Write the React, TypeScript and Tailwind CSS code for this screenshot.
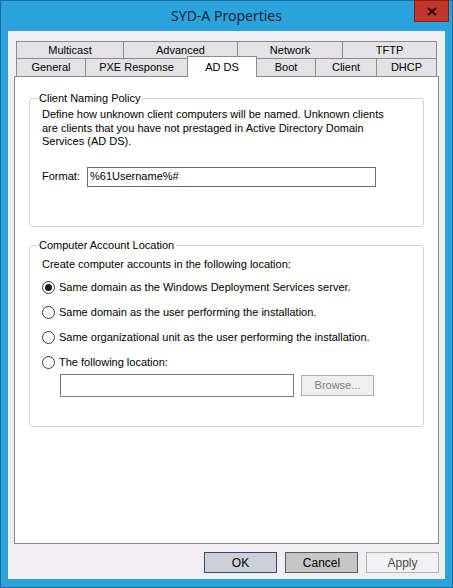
import React from "react";

const font = { fontFamily: '"Liberation Sans", Arial, sans-serif' };

function Radio({ checked, label }: { checked?: boolean; label: string }) {
  return (
    <div className="flex items-center h-[25px]">
      <span className="w-[13px] h-[13px] rounded-full border border-[#3a3a3a] bg-white flex items-center justify-center">
        {checked && <span className="w-[7px] h-[7px] rounded-full bg-[#1a1a1a]" />}
      </span>
      <span className="ml-[4px] text-[11px] text-black">{label}</span>
    </div>
  );
}

export default function App() {
  const row1 = [
    { t: "Multicast", w: 107 },
    { t: "Advanced", w: 114 },
    { t: "Network", w: 105 },
    { t: "TFTP", w: 95 },
  ];
  const row2 = [
    { t: "General", w: 69 },
    { t: "PXE Response", w: 102 },
    { t: "AD DS", w: 69, sel: true },
    { t: "Boot", w: 59 },
    { t: "Client", w: 61 },
    { t: "DHCP", w: 61 },
  ];
  return (
    <div
      className="w-[453px] h-[588px] bg-[#2aa3dd] border border-[#1b6a9c] flex flex-col"
      style={font}
    >
      <div className="h-[30px] relative flex items-center justify-center">
        <span className="text-[14px] text-[#17243a] mt-[-1px]" style={{ fontFamily: '"Noto Sans", sans-serif' }}>
          SYD-A Properties
        </span>
        <div className="absolute right-[3px] top-[-1px] w-[35px] h-[22px] bg-[#c4362c] border border-[#7d1f19] flex items-center justify-center">
          <svg width="10" height="9" viewBox="0 0 10 9">
            <path d="M1 1 L9 8 M9 1 L1 8" stroke="#2a0a08" strokeWidth="2.2" />
          </svg>
        </div>
      </div>
      <div className="mx-[7px] mb-[8px] flex-1 bg-[#f0eef2] flex flex-col pt-[10px] px-[6px]">
        <div className="ml-[2px] w-[421px] flex flex-col">
          <div className="flex h-[17px]">
            {row1.map((t, i) => (
              <div
                key={t.t}
                className={`h-full border-t border-l border-[#8b8b8b] bg-[#e4e2e7] flex items-center justify-center text-[11px] text-black ${i === row1.length - 1 ? "border-r" : ""}`}
                style={{ width: t.w }}
              >
                {t.t}
              </div>
            ))}
          </div>
          <div className="flex h-[18px] items-start">
            {row2.map((t, i) =>
              t.sel ? (
                <div
                  key={t.t}
                  className="relative z-10 mt-[-2px] h-[21px] border-t border-l border-r border-[#8b8b8b] bg-white flex items-start pt-[2px] justify-center text-[11px] text-black"
                  style={{ width: t.w + 1, marginRight: -1 }}
                >
                  {t.t}
                </div>
              ) : (
                <div
                  key={t.t}
                  className={`h-full border-t border-l border-[#8b8b8b] bg-[#e4e2e7] flex items-center justify-center text-[11px] text-black ${i === row2.length - 1 ? "border-r" : ""}`}
                  style={{ width: t.w }}
                >
                  {t.t}
                </div>
              )
            )}
          </div>
        </div>
        <div className="w-[425px] h-[468px] border border-[#8a8a8a] bg-white flex flex-col">
          <fieldset className="mt-[14px] ml-[14px] w-[395px] h-[136px] border border-[#d3d3d3] rounded-[3px]">
            <legend className="ml-[7px] px-[2px] text-[11px] leading-[14px] text-black">
              Client Naming Policy
            </legend>
            <div className="pl-[12px] pt-[3px] text-[11px] leading-[13.5px] text-black">
              <p>Define how unknown client computers will be named. Unknown clients</p>
              <p>are clients that you have not prestaged in Active Directory Domain</p>
              <p>Services (AD DS).</p>
              <div className="flex items-center mt-[18px]">
                <span className="w-[45px]">Format:</span>
                <div className="w-[289px] h-[20px] border border-[#6b6b6b] flex items-center pl-[2px] text-[11px]">
                  %61Username%#
                </div>
              </div>
            </div>
          </fieldset>
          <fieldset className="mt-[11px] ml-[14px] w-[395px] h-[189px] border border-[#d3d3d3] rounded-[3px]">
            <legend className="ml-[7px] px-[2px] text-[11px] leading-[14px] text-black">
              Computer Account Location
            </legend>
            <div className="pl-[12px] pt-[5px] text-[11px] text-black">
              <div className="leading-[14px]">Create computer accounts in the following location:</div>
              <div className="mt-[4px]">
                <Radio checked label="Same domain as the Windows Deployment Services server." />
                <Radio label="Same domain as the user performing the installation." />
                <Radio label="Same organizational unit as the user performing the installation." />
                <Radio label="The following location:" />
              </div>
              <div className="flex items-start mt-[-1px] ml-[18px]">
                <div className="w-[234px] h-[23px] border border-[#7a7a7a]" />
                <div className="ml-[7px] mt-[1px] w-[73px] h-[21px] border border-[#adadad] bg-[#efefef] flex items-center justify-center text-[#7d7d7d] text-[11px]">
                  Browse...
                </div>
              </div>
            </div>
          </fieldset>
        </div>
        <div className="flex justify-end gap-[8px] mt-[8px] pr-[0px]">
          <div className="w-[73px] h-[21px] border border-[#2c4a7c] bg-[#cdd0d6] flex items-center justify-center text-[12px] text-black">
            OK
          </div>
          <div className="w-[73px] h-[21px] border border-[#5a5a5a] bg-[#c6c6c6] flex items-center justify-center text-[12px] text-black">
            Cancel
          </div>
          <div className="w-[73px] h-[21px] border border-[#b0b0b0] bg-[#f2f0f2] flex items-center justify-center text-[12px] text-[#4a4a4a]">
            Apply
          </div>
        </div>
      </div>
    </div>
  );
}
